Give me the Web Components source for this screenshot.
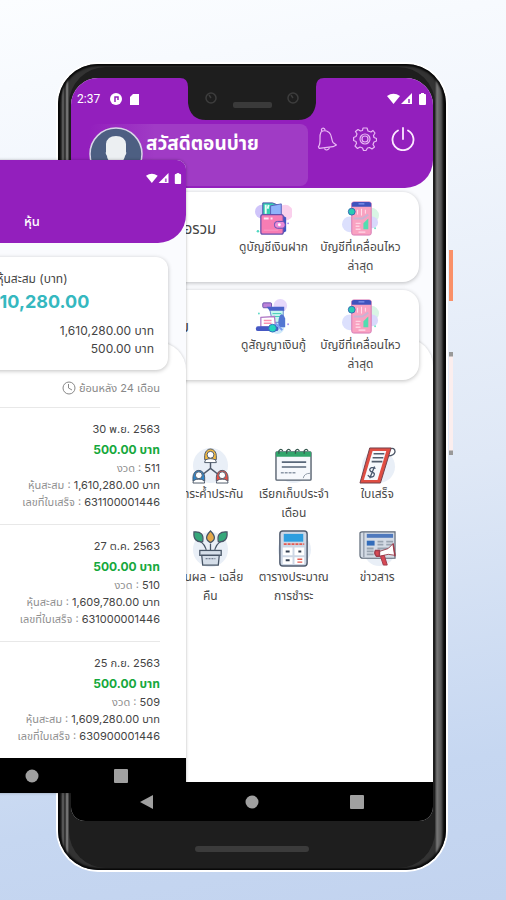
<!DOCTYPE html>
<html lang="th">
<head>
<meta charset="utf-8">
<meta name="viewport" content="width=device-width, initial-scale=1">
<title>สหกรณ์</title>
<style>
    body {
        margin: 0;
        min-height: 100vh;
        background: linear-gradient(170deg, #fbfdff 0%, #f3f7fd 18%, #dfe8f6 55%, #c6d7f1 85%, #c2d3ef 100%);
        font-family: Inter, "Noto Sans Thai", "Noto Sans", sans-serif;
        font-size: 12px;
        color: #444;
    }
</style>
</head>
<body>
<coop-app></coop-app>
<script>
const icons = {
    bell: `<svg viewBox="0 0 24 28" fill="none" stroke="#e9b8f4" stroke-width="1.4" stroke-linejoin="round"><path d="M5 6C7 4 11 4 14 6C18 9 17 15 19 18L23 21L19 23L3 25L2 23C6 18 2 11 5 6Z"/><path d="M6 5C4 1 9 0 10 4M9 25C10 28 14 27 15 24"/></svg>`,
    gear: `<svg viewBox="0 0 24 24" fill="none" stroke="#e9b8f4" stroke-width="1.2" stroke-linejoin="round"><path d="M10 1H14L15 4L18 5L20 3.500L22 6L20.500 8.500L21 10.500L23.500 11.500V14L21 15L20 17.500L21.500 20L19 22L16.500 20.500L14.500 21L13 23.500H10.500L9.500 21L7 20L4.500 21.500L2 19L3.500 16.500L3 14.500L.6 13.500V10.500L3 9.500L4 7L2.500 4.500L5 2.500L7.500 4L9.500 3.500Z"/><circle cx="12" cy="12" r="5"/><circle cx="12" cy="12" r="3"/></svg>`,
    power: `<svg viewBox="0 0 24 24" fill="none" stroke="#fbe9ff" stroke-width="1.8" stroke-linecap="round"><path d="M12 1V12M7 3.500A10.500 10.500 0 1 0 17 3.500"/></svg>`,
    signals: `<svg viewBox="0 0 40 12" fill="#fff"><path d="M0 3Q6.500-1.500 13 3L6.500 11Z"/><path d="M25 0V11H14Z"/><path d="M21 6H23V10H21Z" fill="#b05fd0"/><rect x="32" y="1" width="7" height="11" rx="1"/><rect x="34" width="3" height="3"/></svg>`,
    clock: `<svg viewBox="0 0 14 14" fill="none" stroke="#888" stroke-width="1"><circle cx="7" cy="7" r="6"/><path d="M6.500 3V7L10 9"/></svg>`,
    avatar: `<svg viewBox="0 0 54 54"><circle cx="27" cy="27" r="26" fill="#4d5f82" stroke="#d9d5e8" stroke-width="1.500"/><path d="M17 17Q18 9 27 9Q36 9 37 17V25Q38 26 36 29Q35 34 31 36V40L42 46Q28 56 12 46L23 40V36Q18 33 18 29Q16 26 17 25Z" fill="#eceff2"/></svg>`,
    wallet: `<svg viewBox="0 0 38 36"><circle cx="7" cy="11" r="7" fill="#cfc4fa"/><circle cx="31" cy="12" r="8" fill="#fad0ec"/><path d="M8 2H18L23 4V16H8Z" fill="#36cfb3" stroke="#4652a8"/><path d="M11 4V13M14 4L13 8" stroke="#e9fff5" stroke-width="2"/><path d="M16 5L27 3V16H16Z" fill="#8fb3fb" stroke="#5960bd"/><path d="M27 14L32 17V31L27 34Z" fill="#3d55c6"/><rect x="6" y="14" width="23" height="20" rx="2" fill="#f77db4" stroke="#6750ad" stroke-width="1.300"/><path d="M9 18H14M16 18H18" stroke="#ffe4f3" stroke-width="2"/><path d="M9 30H24" stroke="#fb9bc8"/><rect x="20" y="21" width="11" height="7" rx="3" fill="#ec8bd6" stroke="#5d50b5"/><circle cx="25" cy="24.500" r="1.500" fill="#fff"/><circle cx="3" cy="31" r="1.300" fill="#51d8c1"/><circle cx="34" cy="23" r="1" fill="#a98cf1"/></svg>`,
    phone: `<svg viewBox="0 0 38 36"><circle cx="30" cy="15" r="8" fill="#d9f5e5"/><circle cx="8" cy="24" r="8" fill="#dce0fd"/><circle cx="31" cy="22" r="6" fill="#d8d9fc"/><rect x="10" y="1" width="20" height="34" rx="2" fill="#f9a2c1" stroke="#d67ab5"/><path d="M10 6V2L12 1H28L30 2V6Z" fill="#4053bd"/><path d="M17 3H23" stroke="#94a9ff"/><path d="M16 9V14M20 8V15M24 9V13" stroke="#ffe1ed"/><path d="M12 18H21L27 14" fill="none" stroke="#c9b3d3" stroke-width="2"/><path d="M14 23H19M14 26H18M14 29H19" stroke="#ffd3e3" stroke-width="1.500" fill="none"/><path d="M22 29V23L27 18V29Z" fill="#52ddb0"/><path d="M17 32H24" stroke="#ffd9e9" stroke-width="1.500"/><circle cx="10" cy="11" r="3.500" fill="#27ccb4" stroke="#376ab4"/><circle cx="34" cy="28" r="1" fill="#70e3c9"/></svg>`,
    contract: `<svg viewBox="0 0 38 36"><circle cx="26" cy="7" r="7" fill="#e6d8fb"/><circle cx="23" cy="29" r="7" fill="#cfe9f9"/><rect x="8" y="4" width="9" height="5" rx="1" fill="#bd82d8" stroke="#6954ad"/><path d="M15 10H29V24H18Z" fill="#c9f6ef" stroke="#6189cf"/><path d="M12 8H30V12H15Z" fill="#4a62c9"/><path d="M18 15H27M18 18H27" stroke="#43cdb6"/><path d="M24 23C25 15 28 13 31 20V29H24Z" fill="#5376d2"/><path d="M6 19L20 18L21 29H6Z" fill="#fff" stroke="#b179c6" stroke-width="1.300"/><path d="M9 22H17M9 25H17" stroke="#fb91b1" stroke-width="1.500"/><rect x="1" y="28" width="23" height="5" rx="2" fill="#4658c3"/><path d="M17 30L22 26L28 32" stroke="#7b9df2" stroke-width="2" fill="none"/><circle cx="18" cy="30" r="4" fill="#24d3bd" stroke="#3568c1"/><circle cx="4" cy="15" r="1" fill="#64dac9"/><circle cx="34" cy="26" r="1" fill="#a28ff1"/></svg>`,
    people: `<svg viewBox="0 0 38 38"><circle cx="19" cy="19" r="18" fill="#e9eff7"/><path d="M19 14V23M19 22L10 29M19 22L28 29" stroke="#4e596a" stroke-width="1.500"/><g stroke="#4e596a"><path d="M13 9A6 7 0 0 1 25 9V13H13Z" fill="#f4ba3e"/><circle cx="19" cy="8" r="3.500" fill="#fff"/><path d="M13 16Q13 12 19 12Q25 12 25 16Z" fill="#fff"/><path d="M1 31A6 7 0 0 1 13 31V35H1Z" fill="#2f86ca"/><circle cx="7" cy="29" r="3.500" fill="#fff"/><path d="M1 37Q1 33 7 33Q13 33 13 37Z" fill="#fff"/><path d="M25 31A6 7 0 0 1 37 31V35H25Z" fill="#e85044"/><circle cx="31" cy="29" r="3.500" fill="#fff"/><path d="M25 37Q25 33 31 33Q37 33 37 37Z" fill="#fff"/></g></svg>`,
    calendar: `<svg viewBox="0 0 38 38"><circle cx="19" cy="21" r="16" fill="#e9eff7"/><rect x="1" y="5" width="36" height="29" rx="1" fill="#f6f8fc" stroke="#535e6c" stroke-width="1.400"/><path d="M1 10V5H37V10Z" fill="#31a56b"/><path d="M4 7V4Q6 1 8 4M12 7V4Q14 1 16 4M21 7V4Q23 1 25 4M30 7V4Q32 1 34 4" stroke="#34564d" fill="none" stroke-width="1.300"/><path d="M7 15.500H32M7 20.500H32" stroke="#596779" stroke-width="1.700"/><path d="M6 26.500H22" stroke="#8d98a7" stroke-width="1.500" stroke-dasharray="3 1"/><path d="M29 32Q30 27 36 27" stroke="#8f9aa8" fill="none"/></svg>`,
    receipt: `<svg viewBox="0 0 38 38"><circle cx="20" cy="20" r="17" fill="#e9eff7"/><path d="M31 2Q37 0 37 5Q36 9 30 9" fill="#fff" stroke="#4d5869" stroke-width="1.400"/><path d="M11 1H33L22 37H1Z" fill="#df4e43" stroke="#71404a"/><path d="M14 4H28L19 34H5Z" fill="#f6f9fd"/><path d="M15 7H26M14 11H25M13 15H24" stroke="#515d6d" stroke-width="1.600"/><path d="M17 22Q12 20 11 23Q11 25 14 26Q17 27 15 30Q12 32 9 29M16 20L11 32" fill="none" stroke="#45546b" stroke-width="1.300"/></svg>`,
    plant: `<svg viewBox="0 0 38 38"><circle cx="19" cy="20" r="18" fill="#e9eff7"/><g stroke="#485667" stroke-width="1.300"><path d="M19 14V23M7 11Q14 14 15 23M31 11Q24 14 23 23" fill="none"/><path d="M2 2Q13 1 11 12Q1 13 2 2ZM36 2Q25 1 27 12Q37 13 36 2Z" fill="#36a77a"/><path d="M19 1Q11 9 19 13Q27 9 19 1Z" fill="#e4a849"/><rect x="8" y="21" width="22" height="5" fill="#d5dee9"/><path d="M10 26H28L27 36H11Z" fill="#d5dee9"/></g><path d="M14 29.500H24" stroke="#536174" stroke-dasharray="2 1"/></svg>`,
    calculator: `<svg viewBox="0 0 38 38"><circle cx="20" cy="20" r="17" fill="#e9eff7"/><rect x="5" y="1" width="28" height="36" rx="3" fill="#cdd7e5" stroke="#505c6f" stroke-width="1.500"/><rect x="9" y="4" width="20" height="8" fill="#2d9edf"/><path d="M9 14.500H30" stroke="#e65b50" stroke-width="2" stroke-dasharray="3 1"/><path d="M8 18H18V26H8ZM20 18H30V26H20ZM8 28H18V35H8ZM20 28H30V35H20Z" fill="#fff"/><path d="M11 22H15M24 22H27M11 31H15" stroke="#344052" stroke-width="2"/><path d="M23 30H28M23 33H28" stroke="#e65b50" stroke-width="1.500"/></svg>`,
    news: `<svg viewBox="0 0 38 38"><circle cx="21" cy="21" r="16" fill="#e9eff7"/><path d="M1 3Q1 2 3 2H37V29H4Q1 29 1 26Z" fill="#d4dbe5" stroke="#5d6877" stroke-width="1.200"/><path d="M5 2V28" stroke="#7c8796"/><rect x="8" y="4" width="27" height="4" fill="#4f79bd"/><rect x="8" y="11" width="8" height="5" fill="#326cba"/><path d="M19 12H25M28 12H35M19 15H25M28 15H35M8 19H15M8 22H15M8 25H15M19 19H34" stroke="#98a3b0" stroke-width="1.800"/><path d="M21 22L30 19L35 14L37 26L30 25L21 27Z" fill="#fff" stroke="#9a4b57"/><path d="M35 14L37 27M17 21H21V27H18Q15 24 17 21Z" fill="#d84954" stroke="#9e3c4c" stroke-width="1.500"/><path d="M22 27L25 36H29L26 26Z" fill="#d84954" stroke="#9e3c4c"/></svg>`
};

class AppIcon extends HTMLElement {
    connectedCallback() {
        this.attachShadow({mode: 'open'}).innerHTML = `
        <style>
            :host { display: block; flex: none; }
            svg { display: block; width: 100%; height: 100%; }
        </style>
        ${icons[this.getAttribute('name')]}`;
    }
}

class MenuItem extends HTMLElement {
    connectedCallback() {
        this.attachShadow({mode: 'open'}).innerHTML = `
        <style>
            :host { display: block; min-width: 0; }
            a {
                display: flex;
                flex-direction: column;
                align-items: center;
                color: #4a4a4a;
                text-decoration: none;
                text-align: center;
                line-height: 19px;
                font-size: 12px;
                white-space: nowrap;
            }
            app-icon { width: 37px; height: 37px; }
        </style>
        <a href="#"><app-icon name="${this.getAttribute('icon')}"></app-icon><span><slot></slot></span></a>`;
    }
}

class AccountCard extends HTMLElement {
    connectedCallback() {
        this.attachShadow({mode: 'open'}).innerHTML = `
        <style>
            :host {
                display: flex;
                box-sizing: border-box;
                min-height: 90px;
                padding: 8px 15px 0 0;
                border-radius: 16px;
                background: #fff;
                box-shadow: 0 1px 4px rgba(0, 0, 0, 0.25);
            }
            h2 {
                flex: 1;
                margin: 0;
                font-size: 15px;
                font-weight: 400;
                line-height: 58px;
                text-align: center;
                white-space: nowrap;
            }
            ::slotted(menu-item) { width: 87px; }
        </style>
        <h2>${this.getAttribute('heading')}</h2>
        <slot></slot>`;
    }
}

class NavBar extends HTMLElement {
    connectedCallback() {
        this.attachShadow({mode: 'open'}).innerHTML = `
        <style>
            :host { display: flex; justify-content: center; background: #000; }
            button {
                display: flex;
                align-items: center;
                justify-content: center;
                flex: 0 1 29%;
                padding: 0;
                border: 0;
                background: none;
            }
            svg { display: block; width: 14px; height: 14px; fill: #a0a0a0; }
        </style>
        <button aria-label="กลับ"><svg viewBox="0 0 14 14"><path d="M0 7L13 0V14Z"/></svg></button>
        <button aria-label="หน้าหลัก"><svg viewBox="0 0 14 14"><circle cx="7" cy="7" r="6.500"/></svg></button>
        <button aria-label="แอปล่าสุด"><svg viewBox="0 0 14 14"><rect width="14" height="14" rx="1"/></svg></button>`;
    }
}

class HomeScreen extends HTMLElement {
    connectedCallback() {
        this.attachShadow({mode: 'open'}).innerHTML = `
        <style>
            :host { display: flex; flex-direction: column; background: #fafbfe; }
            header {
                height: 110px;
                border-radius: 0 0 28px 0;
                background: #931fbd;
                color: #fff;
            }
            .status {
                display: flex;
                align-items: center;
                gap: 10px;
                height: 42px;
                padding: 0 6px;
                font: 12px Roboto, sans-serif;
            }
            .status svg { width: 30px; height: 12px; }
            .status app-icon { width: 40px; height: 12px; margin-left: auto; }
            .top { display: flex; padding: 4px 18px 0; }
            .greeting {
                display: flex;
                flex: 1;
                min-width: 0;
                height: 62px;
                border-radius: 8px;
                background: linear-gradient(90deg, #931fbd, #a03bc5 30%);
            }
            .greeting app-icon { width: 54px; height: 54px; margin-top: 3px; }
            h1 { margin: 0 0 0 3px; font-size: 19px; line-height: 40px; white-space: nowrap; }
            .tools { display: flex; gap: 14px; padding: 3px 0 0 7px; }
            button { width: 24px; height: 24px; padding: 0; border: 0; background: none; }
            .tools app-icon { height: 24px; }
            .cards { display: grid; gap: 8px; margin: 4px 14px -42px; z-index: 1; }
            .menu {
                flex: 1;
                padding: 109px 14px 0;
                border-radius: 0 28px 0 0;
                background: #fff;
                box-shadow: 0 0 3px rgba(0, 0, 0, 0.2);
            }
            nav {
                display: grid;
                grid-template-columns: repeat(3, 1fr);
                width: 75%;
                margin-left: auto;
                row-gap: 8px;
            }
            nav-bar { height: 39px; }
        </style>
        <header>
            <div class="status">2:37
                <svg viewBox="0 0 30 12"><circle cx="6" cy="6" r="6" fill="#fff"/><path d="M5 9V4H8V7" fill="none" stroke="#931fbd" stroke-width="1.500"/><path d="M20 4L23 1H29V12H20Z" fill="#fff"/></svg>
                <app-icon name="signals"></app-icon>
            </div>
            <div class="top">
                <div class="greeting"><app-icon name="avatar"></app-icon><h1>สวัสดีตอนบ่าย</h1></div>
                <div class="tools">
                    <button aria-label="แจ้งเตือน"><app-icon name="bell"></app-icon></button>
                    <button aria-label="ตั้งค่า"><app-icon name="gear"></app-icon></button>
                    <button aria-label="ออกจากระบบ"><app-icon name="power"></app-icon></button>
                </div>
            </div>
        </header>
        <div class="cards">
            <account-card heading="เงินฝากคงเหลือรวม">
                <menu-item icon="wallet">ดูบัญชีเงินฝาก</menu-item>
                <menu-item icon="phone">บัญชีที่เคลื่อนไหว<br>ล่าสุด</menu-item>
            </account-card>
            <account-card heading="สินเชื่อรวม">
                <menu-item icon="contract">ดูสัญญาเงินกู้</menu-item>
                <menu-item icon="phone">บัญชีที่เคลื่อนไหว<br>ล่าสุด</menu-item>
            </account-card>
        </div>
        <div class="menu">
            <nav>
                <menu-item icon="people">ภาระค้ำประกัน</menu-item>
                <menu-item icon="calendar">เรียกเก็บประจำ<br>เดือน</menu-item>
                <menu-item icon="receipt">ใบเสร็จ</menu-item>
                <menu-item icon="plant">ปันผล - เฉลี่ย<br>คืน</menu-item>
                <menu-item icon="calculator">ตารางประมาณ<br>การชำระ</menu-item>
                <menu-item icon="news">ข่าวสาร</menu-item>
            </nav>
        </div>
        <nav-bar></nav-bar>`;
    }
}

class ShareEntry extends HTMLElement {
    connectedCallback() {
        const [date, period, total, receipt] = ['date', 'period', 'total', 'receipt'].map(key => this.getAttribute(key));
        this.attachShadow({mode: 'open'}).innerHTML = `
        <style>
            :host {
                display: block;
                padding: 10px 0 13px;
                border-top: 1px solid #e8e8e8;
                font-size: 11px;
                line-height: 17px;
                text-align: right;
            }
            div { height: 17px; white-space: nowrap; }
            .date { height: 22px; line-height: 22px; }
            .amount { height: 20px; line-height: 20px; font-size: 12px; font-weight: 700; color: #16a83c; }
            span { color: #909090; }
        </style>
        <div class="date">${date}</div>
        <div class="amount">500.00 บาท</div>
        <div><span>งวด :</span> ${period}</div>
        <div><span>หุ้นสะสม :</span> ${total} บาท</div>
        <div><span>เลขที่ใบเสร็จ :</span> ${receipt}</div>`;
    }
}

class ShareScreen extends HTMLElement {
    connectedCallback() {
        this.attachShadow({mode: 'open'}).innerHTML = `
        <style>
            :host {
                display: block;
                overflow: hidden;
                border-radius: 0 9px 0 0;
                background: #fafbfe;
                box-shadow: 0 0 3px rgba(0, 0, 0, 0.3);
            }
            header {
                height: 83px;
                border-radius: 0 0 28px 0;
                background: #931fbd;
                color: #fff;
                text-align: center;
            }
            header app-icon { width: 36px; height: 11px; margin-left: auto; padding: 13px 4px 0 0; }
            h1 { margin: 0; font-size: 13px; font-weight: 500; line-height: 74px; }
            .summary {
                position: relative;
                margin: 14px 18px -28px;
                padding: 13px 14px 12px;
                border-radius: 12px;
                background: #fff;
                box-shadow: 0 1px 4px rgba(0, 0, 0, 0.25);
                text-align: center;
                line-height: 18px;
            }
            .summary p { margin: 0; text-align: right; }
            .summary strong { display: block; margin-bottom: 7px; font-size: 18px; line-height: 27px; color: #35b8bf; }
            .list {
                padding: 32px 26px 0;
                border-radius: 0 28px 0 0;
                background: #fff;
                box-shadow: 0 0 3px rgba(0, 0, 0, 0.2);
            }
            .range {
                display: flex;
                align-items: center;
                justify-content: flex-end;
                gap: 3px;
                height: 28px;
                margin-bottom: 5px;
                font-size: 11px;
                color: #888;
            }
            .range app-icon { width: 14px; height: 14px; }
            nav-bar { height: 35px; }
        </style>
        <header>
            <app-icon name="signals"></app-icon>
            <h1>หุ้น</h1>
        </header>
        <div class="summary">
            หุ้นสะสม (บาท)
            <strong>1,610,280.00</strong>
            <p>1,610,280.00 บาท</p>
            <p>500.00 บาท</p>
        </div>
        <div class="list">
            <div class="range"><app-icon name="clock"></app-icon>ย้อนหลัง 24 เดือน</div>
            <share-entry date="30 พ.ย. 2563" period="511" total="1,610,280.00" receipt="631100001446"></share-entry>
            <share-entry date="27 ต.ค. 2563" period="510" total="1,609,780.00" receipt="631000001446"></share-entry>
            <share-entry date="25 ก.ย. 2563" period="509" total="1,609,280.00" receipt="630900001446"></share-entry>
        </div>
        <nav-bar></nav-bar>`;
    }
}

class PhoneFrame extends HTMLElement {
    connectedCallback() {
        this.attachShadow({mode: 'open'}).innerHTML = `
        <style>
            :host {
                position: relative;
                display: flex;
                padding: 3px 11px 2px;
                border-radius: 40px;
                background: linear-gradient(90deg, #111 0, #222 3px, #666 5px, #222 7px, #888 9px, #333 11px, #333 calc(100% - 11px), #777 calc(100% - 9px), #555 calc(100% - 5px), #111 calc(100% - 2px));
                box-shadow: 0 0 0 2px #fff, inset 0 0 2px 2px #080808;
            }
            .face {
                display: flex;
                flex: 1;
                flex-direction: column;
                min-width: 0;
                padding: 11px 2px 0;
                border-radius: 37px;
                background: #1e1e1e;
            }
            ::slotted(*) { flex: 1; overflow: hidden; border-radius: 27px 27px 14px 14px; }
            .notch { position: absolute; top: 13px; left: 50%; width: 144px; margin-left: -72px; }
            .chin { display: flex; align-items: center; justify-content: center; height: 47px; padding-top: 8px; box-sizing: border-box; }
            .chin i { width: 114px; height: 6px; border-radius: 3px; background: #3b3b3b; }
            .key { position: absolute; right: -7px; top: 186px; width: 4px; height: 51px; background: #fa9068; }
            .rocker { top: 288px; height: 103px; background: linear-gradient(#999 4px, #fbeeee 5px, #fbeeee 98px, #999 99px); }
        </style>
        <div class="face">
            <slot></slot>
            <div class="chin"><i></i></div>
        </div>
        <svg class="notch" viewBox="0 0 144 43">
            <path d="M0 0H144V1Q136 1 136 10V26Q134 43 118 43H26Q10 43 8 26V10Q8 1 0 1Z" fill="#1e1e1e"/>
            <rect x="53" y="25" width="39" height="6" rx="2" fill="#3a3a3a"/>
            <g fill="none" stroke="#3d3d3d" stroke-width="1.500"><circle cx="31" cy="21" r="5"/><circle cx="113" cy="21" r="5"/><path d="M29 18L31 21M111 18L113 21"/></g>
        </svg>
        <div class="key"></div>
        <div class="key rocker"></div>`;
    }
}

class CoopApp extends HTMLElement {
    connectedCallback() {
        this.attachShadow({mode: 'open'}).innerHTML = `
        <style>
            :host {
                position: relative;
                display: flex;
                box-sizing: border-box;
                min-height: 100vh;
                padding: 64px 60px 30px 58px;
                overflow: hidden;
            }
            phone-frame { flex: 1; min-width: 0; }
            share-screen { position: absolute; z-index: 2; top: 160px; left: -122px; width: 308px; }
        </style>
        <phone-frame><home-screen></home-screen></phone-frame>
        <share-screen></share-screen>`;
    }
}

customElements.define('app-icon', AppIcon);
customElements.define('menu-item', MenuItem);
customElements.define('account-card', AccountCard);
customElements.define('nav-bar', NavBar);
customElements.define('home-screen', HomeScreen);
customElements.define('share-entry', ShareEntry);
customElements.define('share-screen', ShareScreen);
customElements.define('phone-frame', PhoneFrame);
customElements.define('coop-app', CoopApp);
</script>
</body>
</html>
